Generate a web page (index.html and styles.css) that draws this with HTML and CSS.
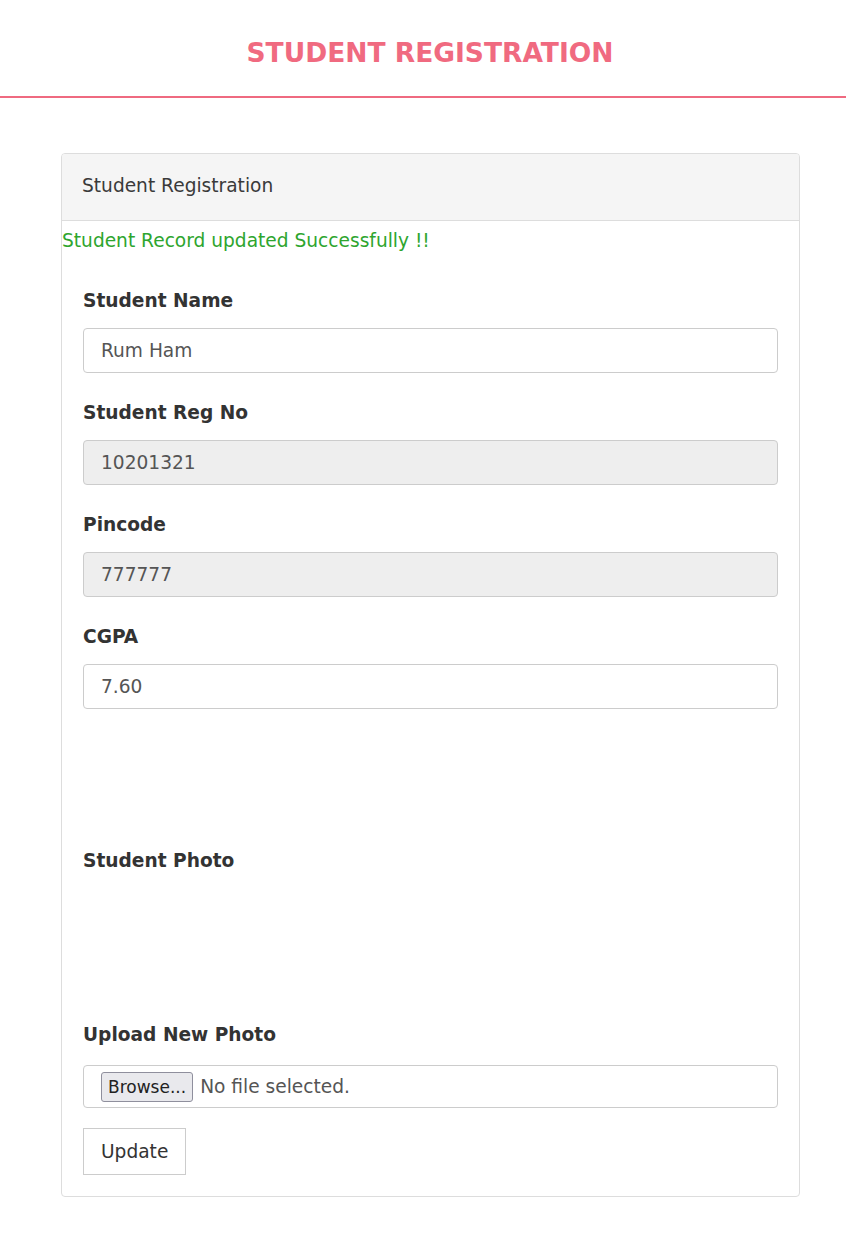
FILE: index.html
```html
<!DOCTYPE html>
<html>
<head>
<meta charset="utf-8">
<link rel="stylesheet" href="styles.css">
</head>
<body>
<header class="top">
  <h1 class="title">STUDENT REGISTRATION</h1>
</header>
<main class="container">
  <section class="panel">
    <div class="panel-heading">Student Registration</div>
    <div class="panel-body">
      <p class="msg">Student Record updated Successfully !!</p>
      <form class="form">
        <div class="group">
          <label class="label">Student Name</label>
          <div class="input">Rum Ham</div>
        </div>
        <div class="group">
          <label class="label">Student Reg No</label>
          <div class="input disabled">10201321</div>
        </div>
        <div class="group">
          <label class="label">Pincode</label>
          <div class="input disabled">777777</div>
        </div>
        <div class="group">
          <label class="label">CGPA</label>
          <div class="input">7.60</div>
        </div>
        <div class="spacer"></div>
        <div class="group">
          <label class="label">Student Photo</label>
          <div class="photo"></div>
        </div>
        <div class="group group-file">
          <label class="label label-upload">Upload New Photo</label>
          <div class="file">
            <span class="browse">Browse...</span>
            <span class="nofile">No file selected.</span>
          </div>
        </div>
        <div class="btn">Update</div>
      </form>
    </div>
  </section>
</main>
</body>
</html>
```
FILE: styles.css
```css
* { box-sizing: border-box; }
body {
  margin: 0;
  font-family: "DejaVu Sans", sans-serif;
  font-size: 18.6px;
  color: #333;
  background: #fff;
}
.top {
  height: 98px;
  border-bottom: 2px solid #ef6a80;
  display: flex;
  align-items: center;
  justify-content: center;
  padding-top: 10px;
  padding-left: 14px;
}
.title {
  margin: 0;
  font-size: 26.5px;
  font-weight: bold;
  color: #f06a80;
  line-height: 30px;
}
.container {
  width: 739px;
  margin: 55px 0 0 61px;
}
.panel {
  border: 1px solid #ddd;
  border-radius: 4px;
}
.panel-heading {
  background: #f5f5f5;
  border-bottom: 1px solid #ddd;
  border-radius: 3px 3px 0 0;
  height: 67px;
  padding: 0 20px 3px 20px;
  display: flex;
  align-items: center;
  line-height: 24px;
  color: #3a3a3a;
}
.panel-body { padding: 0; }
.msg {
  margin: 8px 0 0 0;
  line-height: 24px;
  height: 22px;
  color: #2ea52e;
}
.form {
  padding: 40px 21px 21px 21px;
}
.group { margin-bottom: 30px; }
.label {
  display: block;
  font-weight: bold;
  line-height: 20px;
  margin-bottom: 17px;
}
.input {
  height: 45px;
  border: 1px solid #ccc;
  border-radius: 4px;
  padding: 0 17px;
  display: flex;
  align-items: center;
  color: #555;
  background: #fff;
}
.input.disabled { background: #eee; }
.spacer { height: 112px; }
.photo { height: 107px; }
.label-upload { margin-bottom: 20px; }
.group-file { margin-bottom: 20px; }
.file {
  height: 43px;
  border: 1px solid #ccc;
  border-radius: 4px;
  padding: 0 17px;
  display: flex;
  align-items: center;
  gap: 7px;
  color: #555;
}
.browse {
  height: 30px;
  padding: 0 6px;
  border: 1px solid #8f8f9d;
  border-radius: 3px;
  background: #e9e9ed;
  color: #222;
  font-size: 17px;
  display: flex;
  align-items: center;
}
.btn {
  display: inline-flex;
  align-items: center;
  height: 47px;
  padding: 0 17px;
  border: 1px solid #ccc;
  color: #333;
  background: #fff;
}
```
